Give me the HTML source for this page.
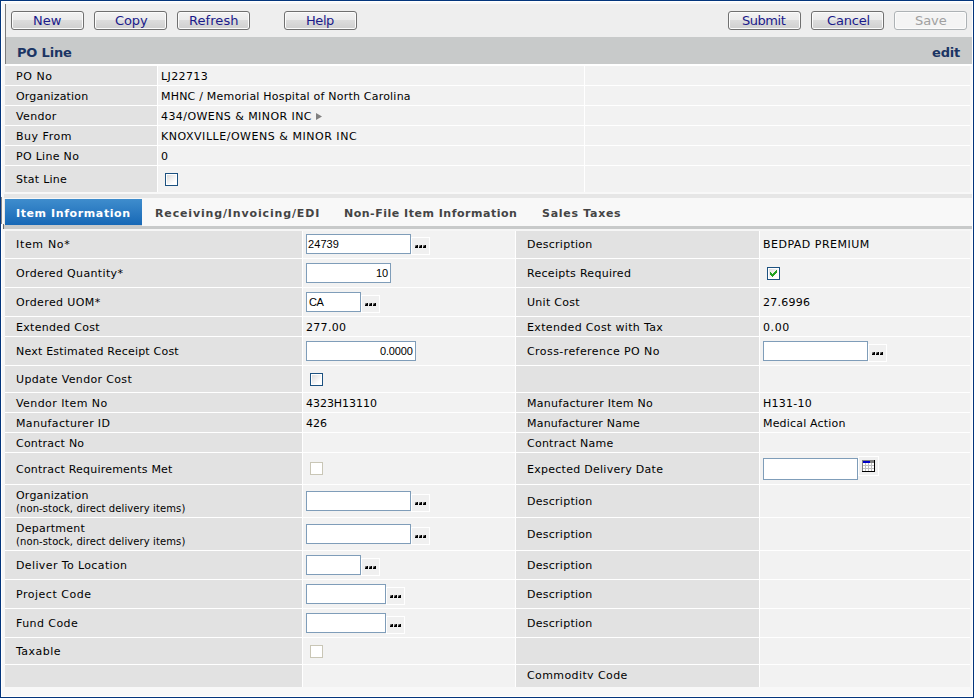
<!DOCTYPE html>
<html lang="en"><head><meta charset="utf-8"><title>PO Line</title>
<style>
html,body{margin:0;padding:0;}
body{width:974px;height:698px;overflow:hidden;position:relative;background:#f8f8f8;
 font-family:"DejaVu Sans","Liberation Sans",sans-serif;font-size:11px;color:#000;}
div,span{box-sizing:border-box;}
.a{position:absolute;}
.t{position:absolute;white-space:nowrap;}
.r11{font:11px/13px "DejaVu Sans","Liberation Sans",sans-serif;}
.b11{font:bold 11px/13px "DejaVu Sans","Liberation Sans",sans-serif;}
.b13{font:bold 13px/16px "DejaVu Sans","Liberation Sans",sans-serif;}
.r13{font:13px/16px "DejaVu Sans","Liberation Sans",sans-serif;}
.r10{font:10px/12px "DejaVu Sans","Liberation Sans",sans-serif;}
.a11{font:11px/13px "Liberation Sans",sans-serif;}
.frame{left:0;top:0;width:974px;height:698px;border:1px solid #03357c;z-index:50;}
.frame2{left:1px;top:1px;width:972px;height:696px;border:1px solid #fff;z-index:49;}
.tb{left:6px;top:4px;width:966px;height:33px;background:#eeeeee;}
.vline{left:5px;top:4px;width:1px;height:60px;background:#7a7a7a;}
.hd{left:6px;top:37px;width:966px;height:27px;background:#c8caca;}
.btn{top:11px;width:73px;height:19px;border:1px solid #707070;border-radius:3px;
 background:linear-gradient(#f3f3f3 0,#ebebeb 8px,#dddddd 8px,#cfcfcf 100%);box-shadow:inset 0 0 0 1px #fcfcfc;}
.btn.dis{border-color:#adb2b5;background:#f4f4f4;}
.l{background:#e2e2e2;}
.v{background:#f2f2f2;}
.sep{background:#fff;}
.inp{background:#fff;border:1px solid #7f9db9;height:20px;}
.lk{width:19px;height:18px;border:1px solid #fff;background:#f0f0f0;}
.cb{width:13px;height:13px;border:1px solid #1c5180;background:#fff;}
.cb i{position:absolute;left:1px;top:1px;width:9px;height:9px;background:linear-gradient(135deg,#dcdcdc,#ffffff 80%);display:block;}
.cb.dis{border-color:#c9c6b6;}
.cb.dis i{background:#fff;}
.tab{top:199px;height:26px;}
.tab.act{background:linear-gradient(#3f8dcd,#1768b6);}
</style></head>
<body>
<div class="a frame"></div><div class="a frame2"></div>
<div class="a tb"></div><div class="a vline"></div>
<div class="a btn" style="left:11px"></div>
<div class="a btn" style="left:94px"></div>
<div class="a btn" style="left:177px"></div>
<div class="a btn" style="left:284px"></div>
<div class="a btn" style="left:728px"></div>
<div class="a btn" style="left:811px"></div>
<div class="a btn dis" style="left:894px"></div>
<div class="a hd"></div>
<div class="a sep" style="left:6px;top:64px;width:966px;height:2px"></div>
<div class="a sep" style="left:5px;top:66px;width:965px;height:126px"></div>
<div class="a l" style="left:5px;top:66px;width:152px;height:19px"></div>
<div class="a v" style="left:158px;top:66px;width:426px;height:19px"></div>
<div class="a v" style="left:585px;top:66px;width:385px;height:19px"></div>
<div class="a l" style="left:5px;top:86px;width:152px;height:19px"></div>
<div class="a v" style="left:158px;top:86px;width:426px;height:19px"></div>
<div class="a v" style="left:585px;top:86px;width:385px;height:19px"></div>
<div class="a l" style="left:5px;top:106px;width:152px;height:19px"></div>
<div class="a v" style="left:158px;top:106px;width:426px;height:19px"></div>
<div class="a v" style="left:585px;top:106px;width:385px;height:19px"></div>
<div class="a l" style="left:5px;top:126px;width:152px;height:19px"></div>
<div class="a v" style="left:158px;top:126px;width:426px;height:19px"></div>
<div class="a v" style="left:585px;top:126px;width:385px;height:19px"></div>
<div class="a l" style="left:5px;top:146px;width:152px;height:19px"></div>
<div class="a v" style="left:158px;top:146px;width:426px;height:19px"></div>
<div class="a v" style="left:585px;top:146px;width:385px;height:19px"></div>
<div class="a l" style="left:5px;top:166px;width:152px;height:26px"></div>
<div class="a v" style="left:158px;top:166px;width:426px;height:26px"></div>
<div class="a v" style="left:585px;top:166px;width:385px;height:26px"></div>
<div class="a" style="left:4px;top:194px;width:968px;height:4px;background:#e6e6e6"></div>
<div class="a" style="left:1px;top:197px;width:1px;height:27px;background:#858585;z-index:60"></div>
<div class="a" style="left:3px;top:224px;width:1px;height:5px;background:#707070;z-index:60"></div>
<div class="a" style="left:4px;top:199px;width:1px;height:26px;background:#ebe6e0"></div>
<div class="a" style="left:5px;top:198px;width:967px;height:28px;background:#f8f8f8"></div>
<div class="a tab act" style="left:5px;width:137px"></div>
<div class="a" style="left:4px;top:225px;width:138px;height:1px;background:#c8caca"></div>
<div class="a" style="left:4px;top:226px;width:968px;height:3px;background:#c8caca"></div>
<div class="a" style="left:5px;top:229px;width:967px;height:2px;background:#f6f6f6"></div>
<div class="a sep" style="left:5px;top:231px;width:965px;height:456px"></div>
<div class="a l" style="left:5px;top:231px;width:297px;height:27px"></div>
<div class="a v" style="left:303px;top:231px;width:212px;height:27px"></div>
<div class="a l" style="left:516px;top:231px;width:243px;height:27px"></div>
<div class="a v" style="left:760px;top:231px;width:210px;height:27px"></div>
<div class="a l" style="left:5px;top:259px;width:297px;height:28px"></div>
<div class="a v" style="left:303px;top:259px;width:212px;height:28px"></div>
<div class="a l" style="left:516px;top:259px;width:243px;height:28px"></div>
<div class="a v" style="left:760px;top:259px;width:210px;height:28px"></div>
<div class="a l" style="left:5px;top:288px;width:297px;height:28px"></div>
<div class="a v" style="left:303px;top:288px;width:212px;height:28px"></div>
<div class="a l" style="left:516px;top:288px;width:243px;height:28px"></div>
<div class="a v" style="left:760px;top:288px;width:210px;height:28px"></div>
<div class="a l" style="left:5px;top:317px;width:297px;height:19px"></div>
<div class="a v" style="left:303px;top:317px;width:212px;height:19px"></div>
<div class="a l" style="left:516px;top:317px;width:243px;height:19px"></div>
<div class="a v" style="left:760px;top:317px;width:210px;height:19px"></div>
<div class="a l" style="left:5px;top:337px;width:297px;height:28px"></div>
<div class="a v" style="left:303px;top:337px;width:212px;height:28px"></div>
<div class="a l" style="left:516px;top:337px;width:243px;height:28px"></div>
<div class="a v" style="left:760px;top:337px;width:210px;height:28px"></div>
<div class="a l" style="left:5px;top:366px;width:297px;height:26px"></div>
<div class="a v" style="left:303px;top:366px;width:212px;height:26px"></div>
<div class="a l" style="left:516px;top:366px;width:243px;height:26px"></div>
<div class="a v" style="left:760px;top:366px;width:210px;height:26px"></div>
<div class="a l" style="left:5px;top:393px;width:297px;height:19px"></div>
<div class="a v" style="left:303px;top:393px;width:212px;height:19px"></div>
<div class="a l" style="left:516px;top:393px;width:243px;height:19px"></div>
<div class="a v" style="left:760px;top:393px;width:210px;height:19px"></div>
<div class="a l" style="left:5px;top:413px;width:297px;height:19px"></div>
<div class="a v" style="left:303px;top:413px;width:212px;height:19px"></div>
<div class="a l" style="left:516px;top:413px;width:243px;height:19px"></div>
<div class="a v" style="left:760px;top:413px;width:210px;height:19px"></div>
<div class="a l" style="left:5px;top:433px;width:297px;height:19px"></div>
<div class="a v" style="left:303px;top:433px;width:212px;height:19px"></div>
<div class="a l" style="left:516px;top:433px;width:243px;height:19px"></div>
<div class="a v" style="left:760px;top:433px;width:210px;height:19px"></div>
<div class="a l" style="left:5px;top:453px;width:297px;height:31px"></div>
<div class="a v" style="left:303px;top:453px;width:212px;height:31px"></div>
<div class="a l" style="left:516px;top:453px;width:243px;height:31px"></div>
<div class="a v" style="left:760px;top:453px;width:210px;height:31px"></div>
<div class="a l" style="left:5px;top:485px;width:297px;height:32px"></div>
<div class="a v" style="left:303px;top:485px;width:212px;height:32px"></div>
<div class="a l" style="left:516px;top:485px;width:243px;height:32px"></div>
<div class="a v" style="left:760px;top:485px;width:210px;height:32px"></div>
<div class="a l" style="left:5px;top:518px;width:297px;height:32px"></div>
<div class="a v" style="left:303px;top:518px;width:212px;height:32px"></div>
<div class="a l" style="left:516px;top:518px;width:243px;height:32px"></div>
<div class="a v" style="left:760px;top:518px;width:210px;height:32px"></div>
<div class="a l" style="left:5px;top:551px;width:297px;height:28px"></div>
<div class="a v" style="left:303px;top:551px;width:212px;height:28px"></div>
<div class="a l" style="left:516px;top:551px;width:243px;height:28px"></div>
<div class="a v" style="left:760px;top:551px;width:210px;height:28px"></div>
<div class="a l" style="left:5px;top:580px;width:297px;height:28px"></div>
<div class="a v" style="left:303px;top:580px;width:212px;height:28px"></div>
<div class="a l" style="left:516px;top:580px;width:243px;height:28px"></div>
<div class="a v" style="left:760px;top:580px;width:210px;height:28px"></div>
<div class="a l" style="left:5px;top:609px;width:297px;height:28px"></div>
<div class="a v" style="left:303px;top:609px;width:212px;height:28px"></div>
<div class="a l" style="left:516px;top:609px;width:243px;height:28px"></div>
<div class="a v" style="left:760px;top:609px;width:210px;height:28px"></div>
<div class="a l" style="left:5px;top:638px;width:297px;height:26px"></div>
<div class="a v" style="left:303px;top:638px;width:212px;height:26px"></div>
<div class="a l" style="left:516px;top:638px;width:243px;height:26px"></div>
<div class="a v" style="left:760px;top:638px;width:210px;height:26px"></div>
<div class="a l" style="left:5px;top:665px;width:297px;height:22px"></div>
<div class="a v" style="left:303px;top:665px;width:212px;height:22px"></div>
<div class="a l" style="left:516px;top:665px;width:243px;height:22px"></div>
<div class="a v" style="left:760px;top:665px;width:210px;height:22px"></div>
<div class="a inp" style="left:306px;top:234px;width:105px;height:20px"></div>
<div class="a lk" style="left:411px;top:237px"><svg class="a" style="left:3px;top:7px" width="11" height="3" viewBox="0 0 11 3" shape-rendering="crispEdges"><rect x="0" y="0" width="3" height="3" fill="#000"/><rect x="0" y="0" width="1" height="1" fill="#8a8a8a"/><rect x="1" y="0" width="1" height="1" fill="#555"/><rect x="0" y="1" width="1" height="1" fill="#555"/><rect x="4" y="0" width="3" height="3" fill="#000"/><rect x="4" y="0" width="1" height="1" fill="#8a8a8a"/><rect x="5" y="0" width="1" height="1" fill="#555"/><rect x="4" y="1" width="1" height="1" fill="#555"/><rect x="8" y="0" width="3" height="3" fill="#000"/><rect x="8" y="0" width="1" height="1" fill="#8a8a8a"/><rect x="9" y="0" width="1" height="1" fill="#555"/><rect x="8" y="1" width="1" height="1" fill="#555"/></svg></div>
<div class="a inp" style="left:306px;top:263px;width:85px;height:20px"></div>
<div class="a inp" style="left:306px;top:292px;width:55px;height:20px"></div>
<div class="a lk" style="left:361px;top:295px"><svg class="a" style="left:3px;top:7px" width="11" height="3" viewBox="0 0 11 3" shape-rendering="crispEdges"><rect x="0" y="0" width="3" height="3" fill="#000"/><rect x="0" y="0" width="1" height="1" fill="#8a8a8a"/><rect x="1" y="0" width="1" height="1" fill="#555"/><rect x="0" y="1" width="1" height="1" fill="#555"/><rect x="4" y="0" width="3" height="3" fill="#000"/><rect x="4" y="0" width="1" height="1" fill="#8a8a8a"/><rect x="5" y="0" width="1" height="1" fill="#555"/><rect x="4" y="1" width="1" height="1" fill="#555"/><rect x="8" y="0" width="3" height="3" fill="#000"/><rect x="8" y="0" width="1" height="1" fill="#8a8a8a"/><rect x="9" y="0" width="1" height="1" fill="#555"/><rect x="8" y="1" width="1" height="1" fill="#555"/></svg></div>
<div class="a inp" style="left:306px;top:341px;width:110px;height:20px"></div>
<div class="a inp" style="left:763px;top:341px;width:105px;height:20px"></div>
<div class="a lk" style="left:868px;top:344px"><svg class="a" style="left:3px;top:7px" width="11" height="3" viewBox="0 0 11 3" shape-rendering="crispEdges"><rect x="0" y="0" width="3" height="3" fill="#000"/><rect x="0" y="0" width="1" height="1" fill="#8a8a8a"/><rect x="1" y="0" width="1" height="1" fill="#555"/><rect x="0" y="1" width="1" height="1" fill="#555"/><rect x="4" y="0" width="3" height="3" fill="#000"/><rect x="4" y="0" width="1" height="1" fill="#8a8a8a"/><rect x="5" y="0" width="1" height="1" fill="#555"/><rect x="4" y="1" width="1" height="1" fill="#555"/><rect x="8" y="0" width="3" height="3" fill="#000"/><rect x="8" y="0" width="1" height="1" fill="#8a8a8a"/><rect x="9" y="0" width="1" height="1" fill="#555"/><rect x="8" y="1" width="1" height="1" fill="#555"/></svg></div>
<div class="a inp" style="left:763px;top:458px;width:95px;height:22px"></div>
<div class="a" style="left:858px;top:456px;width:21px;height:20px;border:1px solid #fff;background:#f0f0f0"><svg class="a" style="left:3px;top:3px" width="13" height="12" viewBox="0 0 13 12" shape-rendering="crispEdges"><rect x="0" y="0" width="13" height="12" fill="#c0c0c0"/><rect x="0" y="0" width="13" height="1" fill="#808080"/><rect x="0" y="0" width="1" height="12" fill="#808080"/><rect x="12" y="0" width="1" height="12" fill="#000"/><rect x="0" y="11" width="13" height="1" fill="#000"/><rect x="1" y="1" width="7" height="2" fill="#0000c8"/><rect x="8" y="1" width="4" height="2" fill="#808080"/><rect x="1" y="3" width="2" height="2" fill="#fff"/><rect x="1" y="6" width="2" height="2" fill="#fff"/><rect x="1" y="9" width="2" height="2" fill="#fff"/><rect x="4" y="3" width="2" height="2" fill="#fff"/><rect x="4" y="6" width="2" height="2" fill="#fff"/><rect x="4" y="9" width="2" height="2" fill="#fff"/><rect x="7" y="3" width="2" height="2" fill="#fff"/><rect x="7" y="6" width="2" height="2" fill="#fff"/><rect x="7" y="9" width="2" height="2" fill="#fff"/><rect x="10" y="3" width="2" height="2" fill="#fff"/><rect x="10" y="6" width="2" height="2" fill="#fff"/><rect x="10" y="9" width="2" height="2" fill="#fff"/></svg></div>
<div class="a inp" style="left:306px;top:491px;width:105px;height:20px"></div>
<div class="a lk" style="left:411px;top:494px"><svg class="a" style="left:3px;top:7px" width="11" height="3" viewBox="0 0 11 3" shape-rendering="crispEdges"><rect x="0" y="0" width="3" height="3" fill="#000"/><rect x="0" y="0" width="1" height="1" fill="#8a8a8a"/><rect x="1" y="0" width="1" height="1" fill="#555"/><rect x="0" y="1" width="1" height="1" fill="#555"/><rect x="4" y="0" width="3" height="3" fill="#000"/><rect x="4" y="0" width="1" height="1" fill="#8a8a8a"/><rect x="5" y="0" width="1" height="1" fill="#555"/><rect x="4" y="1" width="1" height="1" fill="#555"/><rect x="8" y="0" width="3" height="3" fill="#000"/><rect x="8" y="0" width="1" height="1" fill="#8a8a8a"/><rect x="9" y="0" width="1" height="1" fill="#555"/><rect x="8" y="1" width="1" height="1" fill="#555"/></svg></div>
<div class="a inp" style="left:306px;top:524px;width:105px;height:20px"></div>
<div class="a lk" style="left:411px;top:527px"><svg class="a" style="left:3px;top:7px" width="11" height="3" viewBox="0 0 11 3" shape-rendering="crispEdges"><rect x="0" y="0" width="3" height="3" fill="#000"/><rect x="0" y="0" width="1" height="1" fill="#8a8a8a"/><rect x="1" y="0" width="1" height="1" fill="#555"/><rect x="0" y="1" width="1" height="1" fill="#555"/><rect x="4" y="0" width="3" height="3" fill="#000"/><rect x="4" y="0" width="1" height="1" fill="#8a8a8a"/><rect x="5" y="0" width="1" height="1" fill="#555"/><rect x="4" y="1" width="1" height="1" fill="#555"/><rect x="8" y="0" width="3" height="3" fill="#000"/><rect x="8" y="0" width="1" height="1" fill="#8a8a8a"/><rect x="9" y="0" width="1" height="1" fill="#555"/><rect x="8" y="1" width="1" height="1" fill="#555"/></svg></div>
<div class="a inp" style="left:306px;top:555px;width:55px;height:20px"></div>
<div class="a lk" style="left:361px;top:558px"><svg class="a" style="left:3px;top:7px" width="11" height="3" viewBox="0 0 11 3" shape-rendering="crispEdges"><rect x="0" y="0" width="3" height="3" fill="#000"/><rect x="0" y="0" width="1" height="1" fill="#8a8a8a"/><rect x="1" y="0" width="1" height="1" fill="#555"/><rect x="0" y="1" width="1" height="1" fill="#555"/><rect x="4" y="0" width="3" height="3" fill="#000"/><rect x="4" y="0" width="1" height="1" fill="#8a8a8a"/><rect x="5" y="0" width="1" height="1" fill="#555"/><rect x="4" y="1" width="1" height="1" fill="#555"/><rect x="8" y="0" width="3" height="3" fill="#000"/><rect x="8" y="0" width="1" height="1" fill="#8a8a8a"/><rect x="9" y="0" width="1" height="1" fill="#555"/><rect x="8" y="1" width="1" height="1" fill="#555"/></svg></div>
<div class="a inp" style="left:306px;top:584px;width:80px;height:20px"></div>
<div class="a lk" style="left:386px;top:587px"><svg class="a" style="left:3px;top:7px" width="11" height="3" viewBox="0 0 11 3" shape-rendering="crispEdges"><rect x="0" y="0" width="3" height="3" fill="#000"/><rect x="0" y="0" width="1" height="1" fill="#8a8a8a"/><rect x="1" y="0" width="1" height="1" fill="#555"/><rect x="0" y="1" width="1" height="1" fill="#555"/><rect x="4" y="0" width="3" height="3" fill="#000"/><rect x="4" y="0" width="1" height="1" fill="#8a8a8a"/><rect x="5" y="0" width="1" height="1" fill="#555"/><rect x="4" y="1" width="1" height="1" fill="#555"/><rect x="8" y="0" width="3" height="3" fill="#000"/><rect x="8" y="0" width="1" height="1" fill="#8a8a8a"/><rect x="9" y="0" width="1" height="1" fill="#555"/><rect x="8" y="1" width="1" height="1" fill="#555"/></svg></div>
<div class="a inp" style="left:306px;top:613px;width:80px;height:20px"></div>
<div class="a lk" style="left:386px;top:616px"><svg class="a" style="left:3px;top:7px" width="11" height="3" viewBox="0 0 11 3" shape-rendering="crispEdges"><rect x="0" y="0" width="3" height="3" fill="#000"/><rect x="0" y="0" width="1" height="1" fill="#8a8a8a"/><rect x="1" y="0" width="1" height="1" fill="#555"/><rect x="0" y="1" width="1" height="1" fill="#555"/><rect x="4" y="0" width="3" height="3" fill="#000"/><rect x="4" y="0" width="1" height="1" fill="#8a8a8a"/><rect x="5" y="0" width="1" height="1" fill="#555"/><rect x="4" y="1" width="1" height="1" fill="#555"/><rect x="8" y="0" width="3" height="3" fill="#000"/><rect x="8" y="0" width="1" height="1" fill="#8a8a8a"/><rect x="9" y="0" width="1" height="1" fill="#555"/><rect x="8" y="1" width="1" height="1" fill="#555"/></svg></div>
<div class="a cb" style="left:165px;top:173px"><i></i></div>
<div class="a cb" style="left:767px;top:267px"><i></i><svg class="a" style="left:2px;top:2px" width="7" height="7" viewBox="0 0 7 7" shape-rendering="crispEdges"><rect x="0" y="2" width="1" height="3" fill="#21a121"/><rect x="1" y="3" width="1" height="3" fill="#21a121"/><rect x="2" y="4" width="1" height="3" fill="#21a121"/><rect x="3" y="3" width="1" height="3" fill="#21a121"/><rect x="4" y="2" width="1" height="3" fill="#21a121"/><rect x="5" y="1" width="1" height="3" fill="#21a121"/><rect x="6" y="0" width="1" height="3" fill="#21a121"/></svg></div>
<div class="a cb" style="left:310px;top:373px"><i></i></div>
<div class="a cb dis" style="left:310px;top:462px"><i></i></div>
<div class="a cb dis" style="left:310px;top:645px"><i></i></div>
<svg class="a" style="left:316px;top:113px" width="6" height="7" viewBox="0 0 6 7"><polygon points="0,0 6,3.5 0,7" fill="#808080"/></svg>
<div class="t r13" style="left:33px;top:13px;letter-spacing:-0.04px;color:#1a1a8a">New</div>
<div class="t r13" style="left:115px;top:13px;letter-spacing:-0.13px;color:#1a1a8a">Copy</div>
<div class="t r13" style="left:189px;top:13px;letter-spacing:0.06px;color:#1a1a8a">Refresh</div>
<div class="t r13" style="left:306px;top:13px;letter-spacing:-0.44px;color:#1a1a8a">Help</div>
<div class="t r13" style="left:742px;top:13px;letter-spacing:-0.46px;color:#1a1a8a">Submit</div>
<div class="t r13" style="left:827px;top:13px;letter-spacing:-0.20px;color:#1a1a8a">Cancel</div>
<div class="t r13" style="left:915px;top:13px;letter-spacing:-0.06px;color:#a0a0a0">Save</div>
<div class="t b13" style="left:17px;top:45px;letter-spacing:-0.18px;color:#1b3564">PO Line</div>
<div class="t b13" style="left:932px;top:45px;letter-spacing:-0.19px;color:#1b3564">edit</div>
<div class="t r11" style="left:16px;top:70px;letter-spacing:0.54px">PO No</div>
<div class="t r11" style="left:16px;top:90px;letter-spacing:0.17px">Organization</div>
<div class="t r11" style="left:16px;top:110px;letter-spacing:0.35px">Vendor</div>
<div class="t r11" style="left:16px;top:130px;letter-spacing:0.52px">Buy From</div>
<div class="t r11" style="left:16px;top:150px;letter-spacing:0.30px">PO Line No</div>
<div class="t r11" style="left:16px;top:173px;letter-spacing:0.26px">Stat Line</div>
<div class="t r11" style="left:161px;top:70px;letter-spacing:0.38px">LJ22713</div>
<div class="t r11" style="left:161px;top:90px;letter-spacing:0.21px">MHNC / Memorial Hospital of North Carolina</div>
<div class="t r11" style="left:161px;top:110px;letter-spacing:0.43px">434/OWENS &amp; MINOR INC</div>
<div class="t r11" style="left:161px;top:130px;letter-spacing:0.53px">KNOXVILLE/OWENS &amp; MINOR INC</div>
<div class="t r11" style="left:161px;top:150px;letter-spacing:0.00px">0</div>
<div class="t b11" style="left:16px;top:207px;letter-spacing:0.60px;color:#fff">Item Information</div>
<div class="t b11" style="left:155px;top:207px;letter-spacing:0.85px;color:#444">Receiving/Invoicing/EDI</div>
<div class="t b11" style="left:344px;top:207px;letter-spacing:0.51px;color:#444">Non-File Item Information</div>
<div class="t b11" style="left:542px;top:207px;letter-spacing:0.71px;color:#444">Sales Taxes</div>
<div class="t r11" style="left:16px;top:238px;letter-spacing:0.67px">Item No*</div>
<div class="t r11" style="left:16px;top:267px;letter-spacing:0.35px">Ordered Quantity*</div>
<div class="t r11" style="left:16px;top:296px;letter-spacing:0.38px">Ordered UOM*</div>
<div class="t r11" style="left:16px;top:321px;letter-spacing:0.29px">Extended Cost</div>
<div class="t r11" style="left:16px;top:345px;letter-spacing:0.21px">Next Estimated Receipt Cost</div>
<div class="t r11" style="left:16px;top:373px;letter-spacing:0.34px">Update Vendor Cost</div>
<div class="t r11" style="left:16px;top:397px;letter-spacing:0.43px">Vendor Item No</div>
<div class="t r11" style="left:16px;top:417px;letter-spacing:0.36px">Manufacturer ID</div>
<div class="t r11" style="left:16px;top:437px;letter-spacing:0.23px">Contract No</div>
<div class="t r11" style="left:16px;top:463px;letter-spacing:0.21px">Contract Requirements Met</div>
<div class="t r11" style="left:16px;top:489px;letter-spacing:0.20px">Organization</div>
<div class="t r11" style="left:16px;top:522px;letter-spacing:0.26px">Department</div>
<div class="t r11" style="left:16px;top:559px;letter-spacing:0.38px">Deliver To Location</div>
<div class="t r11" style="left:16px;top:588px;letter-spacing:0.51px">Project Code</div>
<div class="t r11" style="left:16px;top:617px;letter-spacing:0.43px">Fund Code</div>
<div class="t r11" style="left:16px;top:645px;letter-spacing:0.46px">Taxable</div>
<div class="t r10" style="left:16px;top:503px;letter-spacing:0.10px">(non-stock, direct delivery items)</div>
<div class="t r10" style="left:16px;top:536px;letter-spacing:0.10px">(non-stock, direct delivery items)</div>
<div class="t r11" style="left:527px;top:238px;letter-spacing:0.26px">Description</div>
<div class="t r11" style="left:527px;top:267px;letter-spacing:0.29px">Receipts Required</div>
<div class="t r11" style="left:527px;top:296px;letter-spacing:0.28px">Unit Cost</div>
<div class="t r11" style="left:527px;top:321px;letter-spacing:0.34px">Extended Cost with Tax</div>
<div class="t r11" style="left:527px;top:345px;letter-spacing:0.43px">Cross-reference PO No</div>
<div class="t r11" style="left:527px;top:397px;letter-spacing:0.27px">Manufacturer Item No</div>
<div class="t r11" style="left:527px;top:417px;letter-spacing:0.20px">Manufacturer Name</div>
<div class="t r11" style="left:527px;top:437px;letter-spacing:0.24px">Contract Name</div>
<div class="t r11" style="left:527px;top:463px;letter-spacing:0.27px">Expected Delivery Date</div>
<div class="t r11" style="left:527px;top:495px;letter-spacing:0.26px">Description</div>
<div class="t r11" style="left:527px;top:528px;letter-spacing:0.26px">Description</div>
<div class="t r11" style="left:527px;top:559px;letter-spacing:0.26px">Description</div>
<div class="t r11" style="left:527px;top:588px;letter-spacing:0.26px">Description</div>
<div class="t r11" style="left:527px;top:617px;letter-spacing:0.26px">Description</div>
<div class="t r11" style="left:527px;top:669px;letter-spacing:0.40px;height:10px;overflow:hidden">Commodity Code</div>
<div class="t r11" style="left:306px;top:321px;letter-spacing:0.31px">277.00</div>
<div class="t r11" style="left:306px;top:397px;letter-spacing:-0.04px">4323H13110</div>
<div class="t r11" style="left:306px;top:417px;letter-spacing:0.06px">426</div>
<div class="t r11" style="left:763px;top:238px;letter-spacing:0.49px">BEDPAD PREMIUM</div>
<div class="t r11" style="left:763px;top:296px;letter-spacing:0.25px">27.6996</div>
<div class="t r11" style="left:763px;top:321px;letter-spacing:0.59px">0.00</div>
<div class="t r11" style="left:763px;top:397px;letter-spacing:0.26px">H131-10</div>
<div class="t r11" style="left:763px;top:417px;letter-spacing:0.18px">Medical Action</div>
<div class="t a11" style="left:308px;top:238px;letter-spacing:0.07px">24739</div>
<div class="t a11" style="left:376px;top:267px;letter-spacing:-0.01px">10</div>
<div class="t a11" style="left:309px;top:296px;letter-spacing:-0.55px">CA</div>
<div class="t a11" style="left:380px;top:345px;letter-spacing:-0.16px">0.0000</div>
</body></html>
